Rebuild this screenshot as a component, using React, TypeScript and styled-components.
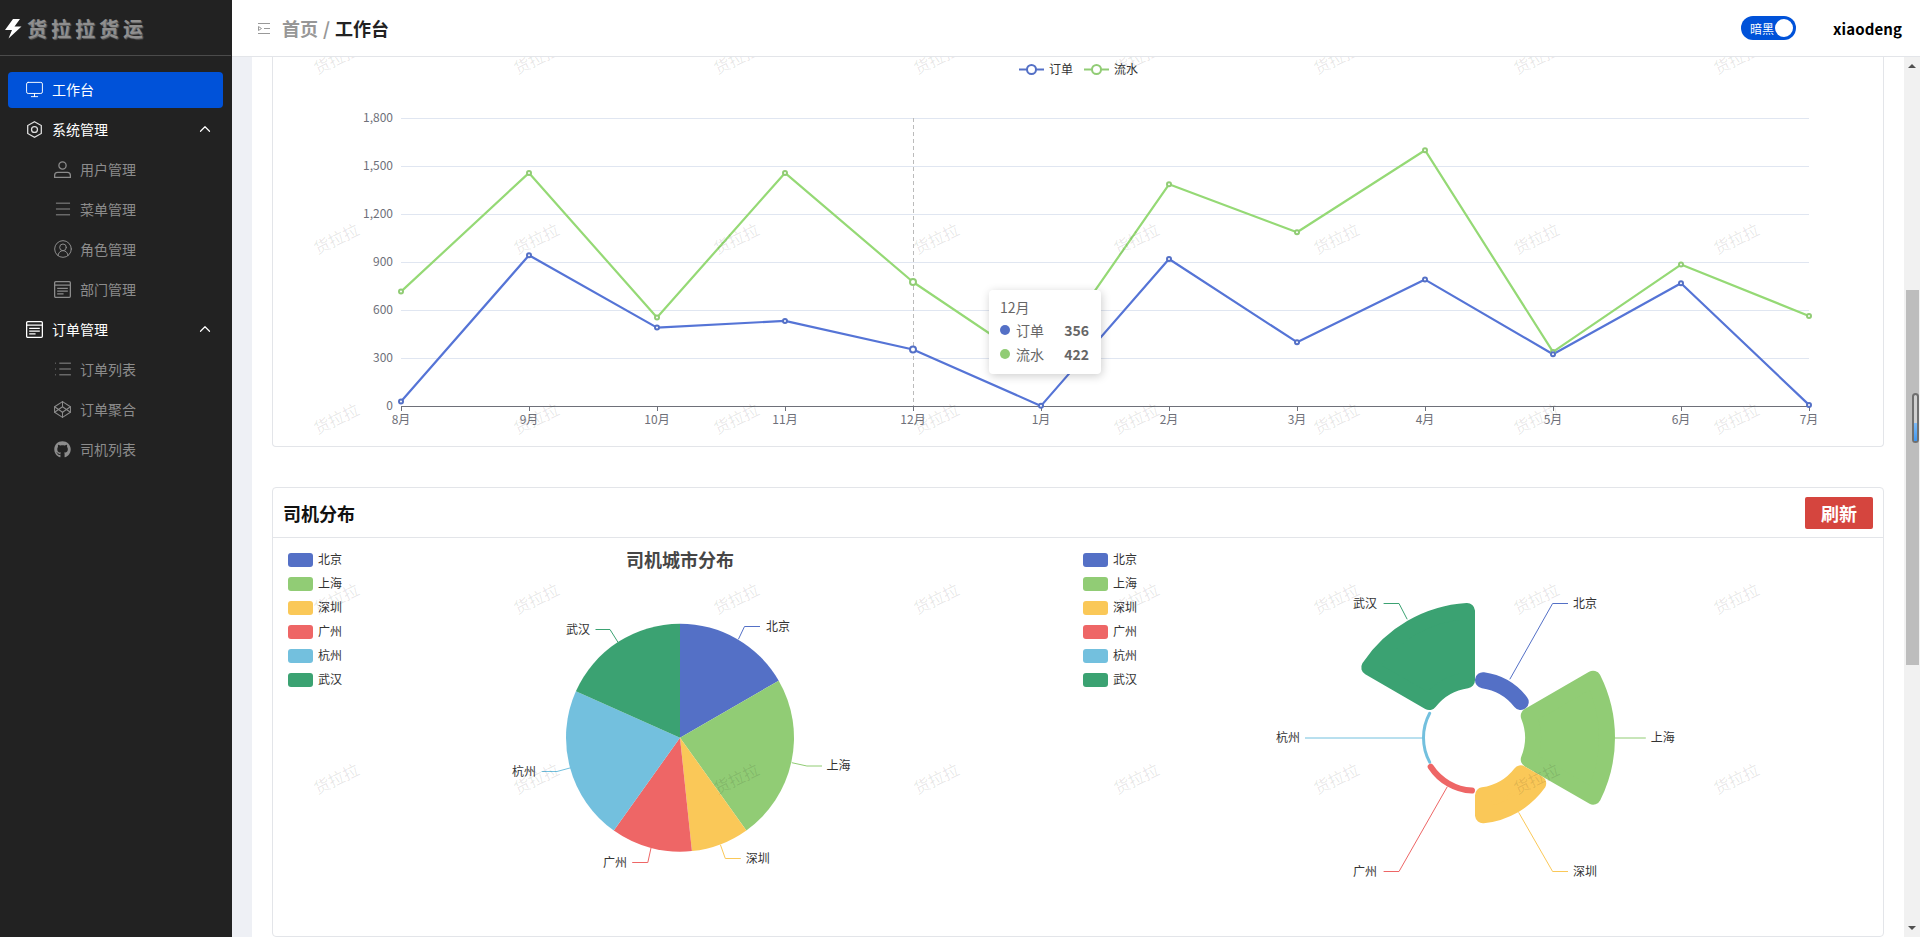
import React from 'react'
import styled, { createGlobalStyle } from 'styled-components'
import { ChevronUp, Monitor, Menu, CircleUserRound, List } from 'lucide-react'
import { FaGithub } from 'react-icons/fa'
import { FiCodepen } from 'react-icons/fi'

const GlobalStyle = createGlobalStyle`
  html, body { margin: 0; padding: 0; height: 100%; overflow: hidden; }
  body { font-family: "Noto Sans CJK SC", "Noto Sans", sans-serif; background: #fff; }
  * { box-sizing: border-box; }
`

const Page = styled.div`
  display: flex;
  width: 1920px;
  height: 937px;
`
const Sidebar = styled.aside`
  width: 232px;
  flex: none;
  background: #222;
  display: flex;
  flex-direction: column;
`
const Logo = styled.div`
  height: 56px;
  display: flex;
  align-items: center;
  padding: 2px 0 0 5px;
  gap: 5px;
  border-bottom: 1px solid #4b4b4b;
  margin-right: 1px;
`
const LogoText = styled.span`
  font-size: 20px;
  font-weight: 700;
  letter-spacing: 4px;
  color: #8f8f8f;
  text-shadow: 1px 1px 1px #666;
`
const Nav = styled.nav`
  display: flex;
  flex-direction: column;
  gap: 4px;
  padding: 16px 9px 0 8px;
`
const NavItem = styled.div<{ $active?: boolean; $sub?: boolean; $parent?: boolean }>`
  height: 36px;
  display: flex;
  align-items: center;
  gap: 9px;
  border-radius: 4px;
  font-size: 14px;
  padding: 0 9px 2px ${p => (p.$sub ? '46px' : '18px')};
  color: ${p => (p.$active || p.$parent ? '#fff' : '#8c8c8c')};
  background: ${p => (p.$active ? '#0052d9' : 'transparent')};
  svg { flex: none; }
`
const NavLabel = styled.span`
  flex: 1;
`
const LucideSlot = styled.span`
  display: flex;
  width: 17px;
  height: 17px;
  align-items: center;
  justify-content: center;
`
const Right = styled.div`
  flex: 1;
  display: flex;
  flex-direction: column;
  min-width: 0;
`
const Header = styled.header`
  height: 57px;
  flex: none;
  background: #fff;
  border-bottom: 1px solid #e3e5e9;
  display: flex;
  align-items: center;
  padding: 0 18px 0 26px;
  position: relative;
  z-index: 2;
`
const Crumbs = styled.div`
  flex: 1;
  display: flex;
  align-items: center;
  gap: 11px;
  font-size: 18px;
  font-weight: 700;
  color: #222;
`
const CrumbHome = styled.span`
  color: #979797;
`
const CrumbSep = styled.span`
  color: #979797;
  margin: 0 5px;
`
const Toggle = styled.div`
  width: 55px;
  height: 24px;
  border-radius: 12px;
  background: #0052d9;
  display: flex;
  align-items: center;
  justify-content: space-between;
  padding: 0 3px 0 9px;
  font-size: 12px;
  color: #fff;
  margin-right: 37px;
`
const Knob = styled.span`
  width: 18px;
  height: 18px;
  border-radius: 50%;
  background: #fff;
`
const UserName = styled.span`
  font-size: 15px;
  font-weight: 700;
  color: #000;
  letter-spacing: 0.1px;
`
const Main = styled.main`
  flex: 1;
  display: flex;
  position: relative;
  overflow: hidden;
  background: #eef0f5;
  padding-left: 20px;
`
const Content = styled.div`
  flex: 1;
  background: #fff;
  padding: 0 20px;
  min-width: 0;
`
const Card = styled.section`
  border: 1px solid #e3e5e9;
  border-radius: 4px;
  background: #fff;
`
const LineCard = styled(Card)`
  position: relative;
  height: 390px;
  margin-bottom: 40px;
  border-top: none;
  border-top-left-radius: 0;
  border-top-right-radius: 0;
`
const DriverCard = styled(Card)`
  height: 450px;
`
const CardHead = styled.div`
  height: 50px;
  display: flex;
  align-items: center;
  justify-content: space-between;
  padding: 0 10px;
  border-bottom: 1px solid #e3e5e9;
`
const CardTitle = styled.h2`
  margin: 0;
  font-size: 18px;
  font-weight: 700;
  color: #111;
`
const RefreshButton = styled.button`
  width: 68px;
  height: 32px;
  border: none;
  border-radius: 2px;
  background: #d5453e;
  color: #fff;
  font: inherit;
  font-size: 18px;
  font-weight: 700;
  padding: 0;
`
const CardBody = styled.div`
  height: 398px;
  display: grid;
  grid-template-columns: 1fr 1fr;
`
const ChartSvg = styled.svg`
  display: block;
  width: 100%;
  height: 100%;
`
const ChartText = styled.text<{ $c?: string }>`
  font-size: 12px;
  fill: ${p => p.$c || '#333'};
  dominant-baseline: central;
`
const PieTitle = styled.text`
  font-size: 18px;
  font-weight: 700;
  fill: #464646;
  text-anchor: middle;
  dominant-baseline: central;
`
const Tooltip = styled.div`
  position: absolute;
  left: 716px;
  top: 233px;
  width: 112px;
  height: 84px;
  padding: 6px 12px 0 11px;
  background: #fff;
  border-radius: 4px;
  box-shadow: 1px 2px 10px rgba(0, 0, 0, 0.2);
  font-size: 14px;
  color: #666;
  line-height: 22px;
`
const TipRow = styled.div`
  display: flex;
  align-items: center;
  height: 24px;
`
const TipDot = styled.span<{ $c: string }>`
  width: 10px;
  height: 10px;
  border-radius: 50%;
  margin-right: 6px;
  background: ${p => p.$c};
`
const TipValue = styled.b`
  margin-left: auto;
  color: #666;
`
const Track = styled.div`
  width: 16px;
  flex: none;
  background: #f1f1f1;
  display: flex;
  flex-direction: column;
  position: relative;
  z-index: 2;
`
const ArrowSlot = styled.div<{ $h: number; $down?: boolean }>`
  height: ${p => p.$h}px;
  flex: ${p => (p.$down ? 1 : 'none')};
  display: flex;
  justify-content: center;
  align-items: ${p => (p.$down ? 'flex-end' : 'flex-start')};
  padding: ${p => (p.$down ? '0 0 7px' : '7px 0 0')};
`
const Arrow = styled.span<{ $down?: boolean }>`
  width: 0;
  height: 0;
  border-left: 4px solid transparent;
  border-right: 4px solid transparent;
  ${p => (p.$down ? 'border-top: 4px solid #505050;' : 'border-bottom: 4px solid #505050;')}
`
const Thumb = styled.div`
  position: relative;
  height: 375px;
  margin: 0 1px 0 2px;
  background: #bdbdbd;
`
const ThumbMark = styled.div`
  position: absolute;
  left: 5.5px;
  top: 103px;
  width: 7.5px;
  height: 50px;
  border: 2px solid #707070;
  border-radius: 4px;
  display: flex;
  align-items: flex-end;
  justify-content: center;
  background: #d0d0d0;
`
const ThumbFill = styled.div`
  width: 3.5px;
  height: 18px;
  background: linear-gradient(#7fbcf7, #3f97f2);
`
const Watermark = styled.div`
  position: absolute;
  left: 3.5px;
  top: -89px;
  width: 1600px;
  display: grid;
  grid-template-columns: repeat(8, 200px);
  grid-auto-rows: 180px;
  pointer-events: none;
  z-index: 1;
`
const Mark = styled.span`
  display: flex;
  align-items: center;
  justify-content: center;
  font-size: 16px;
  color: rgba(0, 0, 0, 0.1);
  transform: rotate(-26deg);
`

const months = ['8月', '9月', '10月', '11月', '12月', '1月', '2月', '3月', '4月', '5月', '6月', '7月']
const orders = [31, 945, 493, 535, 356, 4, 922, 402, 793, 327, 770, 10]
const flows = [718, 1460, 556, 1460, 778, 240, 1389, 1089, 1602, 341, 887, 566]
const xAt = (i: number) => 401 + i * 128
const yAt = (v: number) => 406.5 - v * 0.16
const BLUE = '#5470c6'
const GREEN = '#91cc75'
const LINE_BLUE = '#5574d6'
const LINE_GREEN = '#95d975'

const cities = [
  { name: '北京', color: '#5470c6' },
  { name: '上海', color: '#91cc75' },
  { name: '深圳', color: '#fac858' },
  { name: '广州', color: '#ee6666' },
  { name: '杭州', color: '#73c0de' },
  { name: '武汉', color: '#3ba272' },
]
const pieStops = [0, 60, 144.4, 174, 215.5, 294, 360]
const pieLabels = [
  { pts: '738.4,639.3 744.5,626.5 760,626.5', x: 766, y: 625, anchor: 'start' },
  { pts: '791.8,762.7 806.9,766 822,766', x: 826.5, y: 764, anchor: 'start' },
  { pts: '720.4,844.7 725.3,858.5 740.8,858.5', x: 745.7, y: 857, anchor: 'start' },
  { pts: '651,848 647.8,862.5 632.2,862.5', x: 627, y: 861, anchor: 'end' },
  { pts: '571,767.7 557,771.5 541.6,771.5', x: 536, y: 770, anchor: 'end' },
  { pts: '618,642.3 610,629.5 595.5,629.5', x: 590, y: 628, anchor: 'end' },
]
const roseRadii = [66, 140, 86, 56, 53, 135]
const roseLabels = [
  { pts: '1509.8,679.3 1552.6,603.5 1568,603.5', x: 1573, y: 602, anchor: 'start' },
  { pts: '1615,738 1645.8,738', x: 1650.8, y: 736, anchor: 'start' },
  { pts: '1518.6,812.3 1552.6,871.5 1568,871.5', x: 1573, y: 870, anchor: 'start' },
  { pts: '1447.3,786.7 1399,871.5 1383.6,871.5', x: 1377, y: 870, anchor: 'end' },
  { pts: '1423,738 1305,738', x: 1300, y: 736, anchor: 'end' },
  { pts: '1407.2,619.3 1399,603.5 1383.6,603.5', x: 1377, y: 602, anchor: 'end' },
]

const polar = (cx: number, cy: number, r: number, deg: number) => {
  const rad = ((deg - 90) * Math.PI) / 180
  return `${(cx + r * Math.cos(rad)).toFixed(2)} ${(cy + r * Math.sin(rad)).toFixed(2)}`
}

const pieSlice = (cx: number, cy: number, r: number, a0: number, a1: number) =>
  `M${cx} ${cy} L${polar(cx, cy, r, a0)} A${r} ${r} 0 ${a1 - a0 > 180 ? 1 : 0} 1 ${polar(cx, cy, r, a1)} Z`

// echarts style rounded sector: inset shape + thick round-joined stroke
const RoseSector = ({ r0, r1, a0, a1, color }: { r0: number; r1: number; a0: number; a1: number; color: string }) => {
  const cx = 1475
  const cy = 737.7
  const R = Math.min(8, (r1 - r0) / 2)
  const ro = r1 - R
  const ri = r0 + R
  const dao = (Math.asin(R / ro) * 180) / Math.PI
  const dai = (Math.asin(R / ri) * 180) / Math.PI
  if (ro - ri < 0.6) {
    const d = `M${polar(cx, cy, ro, a0 + dao)} A${ro} ${ro} 0 0 1 ${polar(cx, cy, ro, a1 - dao)}`
    return <path d={d} fill="none" stroke={color} strokeWidth={2 * R} strokeLinecap="round" />
  }
  const d = `M${polar(cx, cy, ro, a0 + dao)} A${ro} ${ro} 0 0 1 ${polar(cx, cy, ro, a1 - dao)} L${polar(cx, cy, ri, a1 - dai)} A${ri} ${ri} 0 0 0 ${polar(cx, cy, ri, a0 + dai)} Z`
  return <path d={d} fill={color} stroke={color} strokeWidth={2 * R} strokeLinejoin="round" />
}

const BoltIcon = () => (
  <svg width="17" height="20" viewBox="0 0 17 20">
    <polygon points="8,0 0,11 7,11 3.5,19.5 16.5,7.5 9.5,7.5 15,0" fill="#fff" />
  </svg>
)
const CollapseIcon = () => (
  <svg width="13" height="11" viewBox="0 0 13 11" fill="none" stroke="#999" strokeWidth="1">
    <path d="M0 .5h12M6 5.5h6M0 10.5h12" />
    <path d="M.5 3.5v4l3-2z" />
  </svg>
)
const HexIcon = () => (
  <svg width="17" height="17" viewBox="0 0 16 16" fill="none" stroke="currentColor" strokeWidth="1.2" opacity=".85">
    <path d="M8 .7l6.4 3.6v7.4L8 15.3l-6.4-3.6V4.3z" />
    <circle cx="8" cy="8" r="2.8" />
  </svg>
)
const PersonIcon = () => (
  <svg width="17" height="17" viewBox="0 0 16 16" fill="none" stroke="currentColor" strokeWidth="1.2">
    <circle cx="8" cy="4.2" r="3.4" />
    <path d="M.6 15.4v-2c0-1.6 1.2-2.8 2.8-2.8h9.2c1.6 0 2.8 1.2 2.8 2.8v2z" />
  </svg>
)
const FormIcon = () => (
  <svg width="17" height="17" viewBox="0 0 16 16" fill="none" stroke="currentColor" strokeWidth="1.2">
    <rect x=".6" y=".6" width="14.8" height="14.8" rx="1" />
    <path d="M.6 3.8h14.8M3 7h10M3 9.6h10M3 12.2h6" />
  </svg>
)

const menu = [
  { label: '工作台', icon: <LucideSlot><Monitor size={19} strokeWidth={1.2} /></LucideSlot>, active: true },
  { label: '系统管理', icon: <HexIcon />, parent: true },
  { label: '用户管理', icon: <PersonIcon />, sub: true },
  { label: '菜单管理', icon: <LucideSlot><Menu size={20} strokeWidth={1.2} /></LucideSlot>, sub: true },
  { label: '角色管理', icon: <LucideSlot><CircleUserRound size={20} strokeWidth={1.2} /></LucideSlot>, sub: true },
  { label: '部门管理', icon: <FormIcon />, sub: true },
  { label: '订单管理', icon: <FormIcon />, parent: true },
  { label: '订单列表', icon: <LucideSlot><List size={20} strokeWidth={1.2} /></LucideSlot>, sub: true },
  { label: '订单聚合', icon: <LucideSlot><FiCodepen size={19} strokeWidth={1.3} /></LucideSlot>, sub: true },
  { label: '司机列表', icon: <FaGithub size={17} />, sub: true },
]

const LineChart = () => {
  const ticks = [0, 300, 600, 900, 1200, 1500, 1800]
  const seriesPts = (vals: number[]) => vals.map((v, i) => `${xAt(i)},${yAt(v).toFixed(1)}`).join(' ')
  return (
    <ChartSvg viewBox="273 57 1610 389">
      <g stroke={BLUE} strokeWidth="2" fill="#fff">
        <line x1="1019" x2="1044" y1="69.5" y2="69.5" />
        <circle cx="1031.5" cy="69.5" r="4.5" />
      </g>
      <ChartText x="1049" y="68">订单</ChartText>
      <g stroke={GREEN} strokeWidth="2" fill="#fff">
        <line x1="1084" x2="1109" y1="69.5" y2="69.5" />
        <circle cx="1096.5" cy="69.5" r="4.5" />
      </g>
      <ChartText x="1114" y="68">流水</ChartText>
      {ticks.map(t => (
        <React.Fragment key={t}>
          {t > 0 && <line x1="401" x2="1809" y1={yAt(t)} y2={yAt(t)} stroke="#e0e6f1" />}
          <ChartText x="393" y={yAt(t) - 2} $c="#6e7079" textAnchor="end">
            {t.toLocaleString('en-US')}
          </ChartText>
        </React.Fragment>
      ))}
      <line x1="913.5" x2="913.5" y1="118" y2="406" stroke="#bbb" strokeDasharray="4 3" />
      <line x1="401" x2="1809" y1="406.5" y2="406.5" stroke="#6e7079" />
      {months.map((m, i) => (
        <React.Fragment key={m}>
          <line x1={xAt(i) + 0.5} x2={xAt(i) + 0.5} y1="406" y2="411" stroke="#6e7079" />
          <ChartText x={xAt(i)} y="418" $c="#6e7079" textAnchor="middle">
            {m}
          </ChartText>
        </React.Fragment>
      ))}
      <polyline points={seriesPts(flows)} fill="none" stroke={LINE_GREEN} strokeWidth="2.2" strokeLinejoin="bevel" />
      <polyline points={seriesPts(orders)} fill="none" stroke={LINE_BLUE} strokeWidth="2.2" strokeLinejoin="bevel" />
      {flows.map((v, i) => (
        <circle key={i} cx={xAt(i)} cy={yAt(v)} r={i === 4 ? 3 : 2} fill="#fff" stroke={GREEN} strokeWidth="2" />
      ))}
      {orders.map((v, i) => (
        <circle key={i} cx={xAt(i)} cy={yAt(v)} r={i === 4 ? 3 : 2} fill="#fff" stroke={BLUE} strokeWidth="2" />
      ))}
    </ChartSvg>
  )
}

const Legend = ({ x, textX }: { x: number; textX: number }) => (
  <>
    {cities.map((c, i) => (
      <React.Fragment key={c.name}>
        <rect x={x} y={553 + i * 24} width="25" height="14" rx="3" fill={c.color} />
        <ChartText x={textX} y={558 + i * 24}>
          {c.name}
        </ChartText>
      </React.Fragment>
    ))}
  </>
)

const PieChart = () => (
  <ChartSvg viewBox="273 538 805 398">
    <Legend x={288} textX={318} />
    <PieTitle x="680" y="559">司机城市分布</PieTitle>
    {cities.map((c, i) => (
      <path key={c.name} d={pieSlice(680, 737.7, 114, pieStops[i], pieStops[i + 1])} fill={c.color} />
    ))}
    {cities.map((c, i) => (
      <React.Fragment key={c.name}>
        <polyline points={pieLabels[i].pts} fill="none" stroke={c.color} />
        <ChartText x={pieLabels[i].x} y={pieLabels[i].y} textAnchor={pieLabels[i].anchor}>
          {c.name}
        </ChartText>
      </React.Fragment>
    ))}
  </ChartSvg>
)

const RoseChart = () => (
  <ChartSvg viewBox="1078 538 805 398">
    <Legend x={1083} textX={1113} />
    {cities.map((c, i) => (
      <RoseSector key={c.name} r0={50} r1={roseRadii[i]} a0={i * 60} a1={(i + 1) * 60} color={c.color} />
    ))}
    {cities.map((c, i) => (
      <React.Fragment key={c.name}>
        <polyline points={roseLabels[i].pts} fill="none" stroke={c.color} />
        <ChartText x={roseLabels[i].x} y={roseLabels[i].y} textAnchor={roseLabels[i].anchor}>
          {c.name}
        </ChartText>
      </React.Fragment>
    ))}
  </ChartSvg>
)

const App = () => (
  <Page>
    <GlobalStyle />
    <Sidebar>
      <Logo>
        <BoltIcon />
        <LogoText>货拉拉货运</LogoText>
      </Logo>
      <Nav>
        {menu.map(item => (
          <NavItem key={item.label} $active={item.active} $sub={item.sub} $parent={item.parent}>
            {item.icon}
            <NavLabel>{item.label}</NavLabel>
            {item.parent && <ChevronUp size={18} strokeWidth={1.6} />}
          </NavItem>
        ))}
      </Nav>
    </Sidebar>
    <Right>
      <Header>
        <Crumbs>
          <CollapseIcon />
          <span>
            <CrumbHome>首页</CrumbHome>
            <CrumbSep>/</CrumbSep>
            工作台
          </span>
        </Crumbs>
        <Toggle>
          暗黑
          <Knob />
        </Toggle>
        <UserName>xiaodeng</UserName>
      </Header>
      <Main>
        <Content>
          <LineCard>
            <LineChart />
            <Tooltip>
              12月
              <TipRow>
                <TipDot $c={BLUE} />
                订单
                <TipValue>356</TipValue>
              </TipRow>
              <TipRow>
                <TipDot $c={GREEN} />
                流水
                <TipValue>422</TipValue>
              </TipRow>
            </Tooltip>
          </LineCard>
          <DriverCard>
            <CardHead>
              <CardTitle>司机分布</CardTitle>
              <RefreshButton>刷新</RefreshButton>
            </CardHead>
            <CardBody>
              <PieChart />
              <RoseChart />
            </CardBody>
          </DriverCard>
        </Content>
        <Track>
          <ArrowSlot $h={233}>
            <Arrow />
          </ArrowSlot>
          <Thumb>
            <ThumbMark>
              <ThumbFill />
            </ThumbMark>
          </Thumb>
          <ArrowSlot $h={0} $down>
            <Arrow $down />
          </ArrowSlot>
        </Track>
        <Watermark>
          {Array.from({ length: 40 }, (_, i) => (
            <Mark key={i}>货拉拉</Mark>
          ))}
        </Watermark>
      </Main>
    </Right>
  </Page>
)

export default App
